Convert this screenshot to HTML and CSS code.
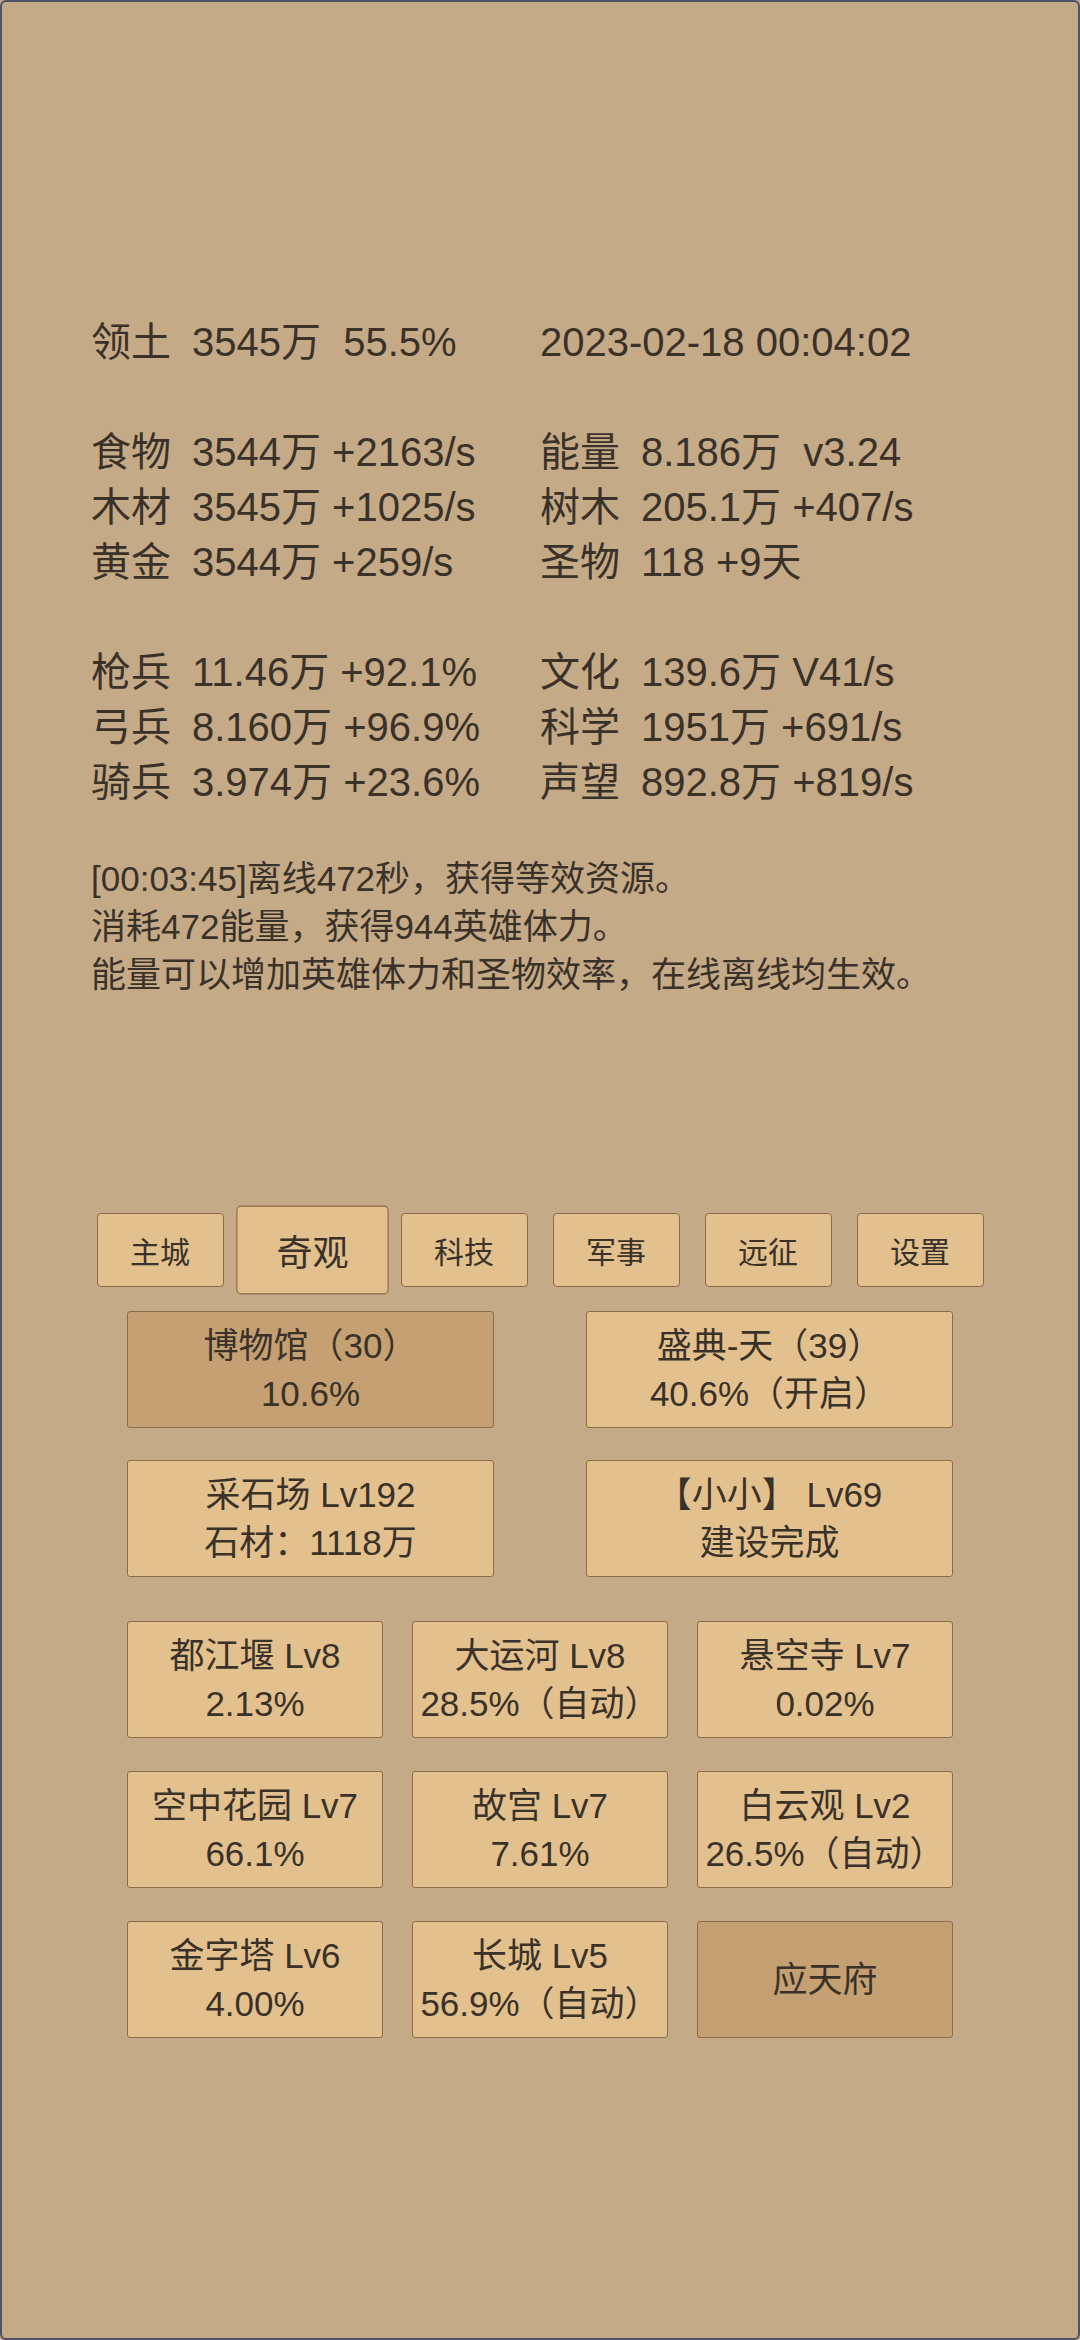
FILE: index.html
```html
<!DOCTYPE html>
<html lang="zh-CN">
<head>
<meta charset="utf-8">
<title>奇观</title>
<link rel="stylesheet" href="styles.css">
</head>
<body>
<div class="screen">
  <div class="stats">
    <div class="row">
      <span class="lbl">领土</span><span class="val">3545万  55.5%</span>
      <span class="date">2023-02-18 00:04:02</span>
    </div>
    <div class="row group">
      <span class="lbl">食物</span><span class="val">3544万 +2163/s</span>
      <span class="lbl">能量</span><span class="val">8.186万  v3.24</span>
    </div>
    <div class="row">
      <span class="lbl">木材</span><span class="val">3545万 +1025/s</span>
      <span class="lbl">树木</span><span class="val">205.1万 +407/s</span>
    </div>
    <div class="row">
      <span class="lbl">黄金</span><span class="val">3544万 +259/s</span>
      <span class="lbl">圣物</span><span class="val">118 +9天</span>
    </div>
    <div class="row group">
      <span class="lbl">枪兵</span><span class="val">11.46万 +92.1%</span>
      <span class="lbl">文化</span><span class="val">139.6万 V41/s</span>
    </div>
    <div class="row">
      <span class="lbl">弓兵</span><span class="val">8.160万 +96.9%</span>
      <span class="lbl">科学</span><span class="val">1951万 +691/s</span>
    </div>
    <div class="row">
      <span class="lbl">骑兵</span><span class="val">3.974万 +23.6%</span>
      <span class="lbl">声望</span><span class="val">892.8万 +819/s</span>
    </div>
  </div>

  <div class="log">
    <div>[00:03:45]离线472秒，获得等效资源。</div>
    <div>消耗472能量，获得944英雄体力。</div>
    <div>能量可以增加英雄体力和圣物效率，在线离线均生效。</div>
  </div>

  <div class="tabs">
    <div class="tab">主城</div>
    <div class="tab active">奇观</div>
    <div class="tab">科技</div>
    <div class="tab">军事</div>
    <div class="tab">远征</div>
    <div class="tab">设置</div>
  </div>

  <div class="grid two">
    <div class="card on"><div>博物馆（30）</div><div>10.6%</div></div>
    <div class="card"><div>盛典-天（39）</div><div>40.6%（开启）</div></div>
    <div class="card"><div>采石场 Lv192</div><div>石材：1118万</div></div>
    <div class="card"><div>【小小】 Lv69</div><div>建设完成</div></div>
  </div>

  <div class="grid three">
    <div class="card"><div>都江堰 Lv8</div><div>2.13%</div></div>
    <div class="card"><div>大运河 Lv8</div><div>28.5%（自动）</div></div>
    <div class="card"><div>悬空寺 Lv7</div><div>0.02%</div></div>
    <div class="card"><div>空中花园 Lv7</div><div>66.1%</div></div>
    <div class="card"><div>故宫 Lv7</div><div>7.61%</div></div>
    <div class="card"><div>白云观 Lv2</div><div>26.5%（自动）</div></div>
    <div class="card"><div>金字塔 Lv6</div><div>4.00%</div></div>
    <div class="card"><div>长城 Lv5</div><div>56.9%（自动）</div></div>
    <div class="card on"><div>应天府</div></div>
  </div>
</div>
</body>
</html>
```

FILE: styles.css
```css
html, body {
  margin: 0;
  padding: 0;
  background: #c5aa87;
}

.screen {
  box-sizing: border-box;
  width: 1080px;
  height: 2340px;
  overflow: hidden;
  background: #c5aa87;
  border: 2px solid #4b5364;
  border-radius: 6px;
  color: #3a3229;
  font-family: "Liberation Sans", "Noto Sans CJK SC", sans-serif;
  padding-top: 313px;
}

.stats {
  padding-left: 89px;
  font-size: 40px;
  line-height: 55px;
}

.row {
  display: grid;
  grid-template-columns: 101px 348px 101px auto;
  height: 55px;
  white-space: pre;
}

.row.group {
  margin-top: 55px;
}

.date {
  grid-column: 3 / span 2;
}

.log {
  margin-top: 45px;
  padding-left: 89px;
  font-size: 35px;
  line-height: 48px;
  white-space: nowrap;
}

.tabs {
  margin-top: 214px;
  display: flex;
  justify-content: center;
  gap: 25px;
}

.tab {
  box-sizing: border-box;
  width: 127px;
  height: 74px;
  display: flex;
  align-items: center;
  justify-content: center;
  font-size: 30px;
  background: #e3c18e;
  border: 1px solid #8d6d48;
  border-radius: 4px;
}

.tab.active {
  transform: scale(1.2);
}

.grid {
  display: grid;
  justify-content: center;
}

.grid.two {
  margin-top: 24px;
  grid-template-columns: 367px 367px;
  column-gap: 92px;
  row-gap: 32px;
}

.grid.three {
  margin-top: 44px;
  grid-template-columns: 256px 256px 256px;
  column-gap: 29px;
  row-gap: 33px;
}

.card {
  box-sizing: border-box;
  height: 117px;
  display: flex;
  flex-direction: column;
  justify-content: center;
  align-items: center;
  font-size: 35px;
  line-height: 48px;
  white-space: nowrap;
  background: #e3c18e;
  border: 1px solid #8d6d48;
  border-radius: 3px;
}

.card.on {
  background: #c4a073;
}
```
